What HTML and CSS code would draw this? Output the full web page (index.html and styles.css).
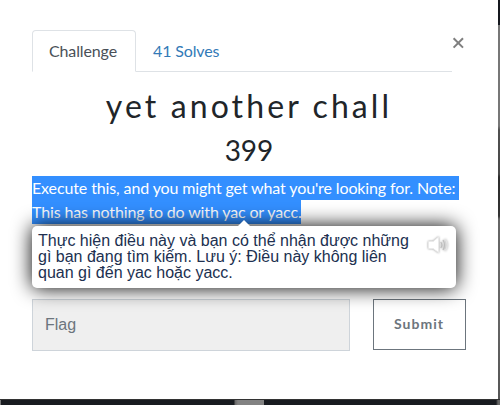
FILE: index.html
```html
<!DOCTYPE html>
<html lang="en">
<head>
<meta charset="utf-8">
<title>Challenge</title>
<link rel="stylesheet" href="styles.css">
</head>
<body>
<div class="page">
  <main class="modal">
    <header class="top">
      <nav class="tabs">
        <a class="tab active">Challenge</a>
        <a class="tab">41 Solves</a>
      </nav>
      <button class="close" aria-label="Close"><svg width="12" height="12" viewBox="0 0 12 12"><path d="M1.6 1.2 11 10.6M11 1.2 1.6 10.6"/></svg></button>
    </header>
    <h2 class="title">yet another chall</h2>
    <h3 class="points">399</h3>
    <div class="description">
      <div><span class="selected first">Execute this, and you might get what you're looking for. Note:</span></div>
      <div><span class="selected second">This has nothing to do with yac or yacc.</span></div>
      <aside class="translation">
        <p>Thực hiện điều này và bạn có thể nhận được những<br>gì bạn đang tìm kiếm. Lưu ý: Điều này không liên<br>quan gì đến yac hoặc yacc.</p>
        <svg class="speaker" width="24" height="20" viewBox="0 0 24 20"><path class="cone" d="M2.5 6.5H7L12.5 2V17.5L7 13.5H2.5Z"/><path class="wave" d="M14.8 7Q17 10 14.8 13M17 5Q20.2 10 17 15"/><path class="wave outer" d="M19.2 4Q23.2 10 19.2 16"/></svg>
      </aside>
    </div>
    <div class="form">
      <input class="flag" placeholder="Flag">
      <button class="submit">Submit</button>
    </div>
  </main>
  <div class="side"></div>
  <div class="bottom"></div>
</div>
</body>
</html>
```

FILE: styles.css
```css
* { box-sizing: border-box; }
body { margin: 0; font-family: Lato, sans-serif; font-size: 16px; line-height: 24px; color: #212529; overflow: hidden; }
.page { width: 500px; height: 405px; display: grid; grid-template: 399px 6px / 498px 2px; }
.modal { background: #fff; padding: 30px 32px 0; }
.top { display: flex; height: 42px; }
.tabs { display: flex; width: 420px; height: 42px; border-bottom: 1px solid #dee2e6; }
.tab { height: 42px; padding: 8px 16px; border: 1px solid transparent; color: #337ab7; white-space: nowrap; letter-spacing: -0.13px; }
.active { width: 104px; color: #495057; background: #fff; border-color: #dee2e6 #dee2e6 #fff; border-radius: 4px 4px 0 0; }
.close { width: 12px; height: 12px; padding: 0; margin-top: 7px; border: 0; background: none; display: flex; }
.close path { fill: none; stroke: #7f7f7f; stroke-width: 2; }
.title, .points { margin: 0; text-align: center; font-weight: 400; white-space: nowrap; }
.title { font-size: 32px; line-height: 38px; letter-spacing: 3.1px; margin-top: 15px; }
.points { font-size: 28px; line-height: 34px; margin-top: 8px; }
.description { position: relative; height: 50px; margin-top: 9px; white-space: nowrap; }
.selected { display: inline-block; height: 24px; background: #338fff; color: #fff; vertical-align: top; }
.first { width: 427px; letter-spacing: -0.12px; }
.second { width: 269px; letter-spacing: -0.14px; }
.translation { position: absolute; left: 0; top: 50px; width: 424px; height: 62px; padding: 7px 6px 0; background: #fff; border-radius: 5px; box-shadow: 0 0 20px #000; display: flex; justify-content: space-between; color: #203050; }
.translation::before { content: ""; position: absolute; left: 206px; top: -6px; border: solid transparent; border-width: 0 6px 6px; border-bottom-color: #fff; }
.translation p { margin: 0; font: 16px/16px "Liberation Sans", sans-serif; }
.speaker { margin-top: 2px; filter: drop-shadow(0 0 1px #999); }
.cone { fill: #fff; stroke: #eaeaea; }
.wave { fill: none; stroke: #bdbdbd; stroke-width: 1.1; }
.outer { stroke: #e6e6e6; }
.form { display: flex; gap: 23px; margin-top: 73px; }
.flag { width: 318px; height: 52px; padding: 0 12px; border: 1px solid #ced4da; border-radius: 0; background: #efefef; font: 16px "Liberation Sans", sans-serif; }
.flag::placeholder { color: #6c757d; }
.submit { width: 93px; height: 51px; padding: 0 1px 2px 0; border: 1px solid #6c757d; background: transparent; color: #6c757d; font: 700 14px Lato, sans-serif; letter-spacing: 1px; }
.side { background: linear-gradient(#15181e 25px, #777 25px, #777 126px, #505050 130px, #484848 174px, #2b2b2b 177px, #333 216px, #666 219px, #666 315px, #555 399px); }
.bottom { grid-column: 1 / -1; border-top: 1px solid #333; background: linear-gradient(90deg, #777 1px, #181b20 1px, #181b20 234px, #666 235px, #828282 238px, #828282 264px, #181b20 264px, #181b20 496px, #666 498px); }
```
